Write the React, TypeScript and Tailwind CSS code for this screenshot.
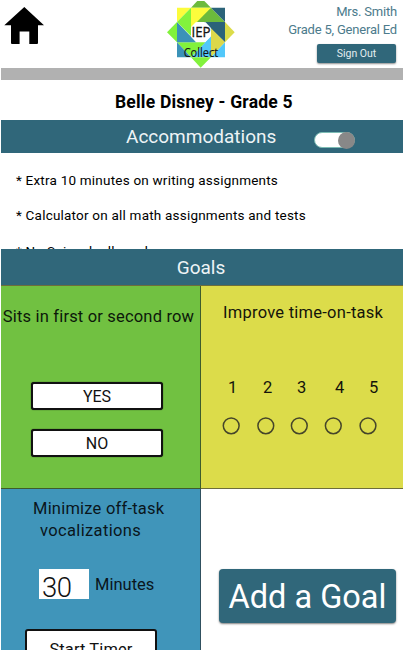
import React from "react";

function HomeIcon() {
  return (
    <svg width="40" height="38" viewBox="0 0 40 38" aria-label="Home">
      <path d="M20.3 0 L40 18.2 H34 V36 Q34 37 33 37 H25.3 V24.5 H15.6 V37 H8 Q7 37 7 36 V18.2 H0.3 Z" />
    </svg>
  );
}

function Logo() {
  return (
    <svg width="78" height="70" viewBox="0 0 234 210" className="block" aria-label="IEP Collect">
      <g clipPath="url(#top)">
        <polygon points="45,23 87,23 45,66" fill="#fcfc3c" />
        <polygon points="87,23 116,-8 147,23" fill="#6cba3c" />
        <polygon points="147,23 189,66 87,66" fill="#6cba3c" />
        <polygon points="87,23 147,23 87,84" fill="#fcfc3c" />
        <polygon points="147,23 189,23 189,66" fill="#2b6379" />
        <polygon points="126,66 189,66 189,127" fill="#2b6379" />
        <polygon points="189,66 218,97 189,127" fill="#dcdc4a" />
        <polygon points="147,85 189,127 147,172" fill="#dcd84a" />
        <polygon points="189,127 189,172 147,172" fill="#52c8fa" />
        <polygon points="147,108 147,172 87,172" fill="#52c8fa" />
        <polygon points="45,127 130,127 87,172" fill="#82f23c" />
        <polygon points="87,172 147,172 116,203" fill="#82f23c" />
        <polygon points="45,127 87,172 45,172" fill="#3b92b8" />
        <polygon points="45,66 45,127 103,127" fill="#3b92b8" />
        <polygon points="87,23 87,108 45,66" fill="#82f23c" />
        <polygon points="45,66 15,97 45,127" fill="#82f23c" />
        <polygon points="101,67 131,67 146,83 146,110 130,126 102,126 88,111 88,80" fill="#fff" />
      </g>
      <clipPath id="top">
        <rect x="0" y="3" width="234" height="207" />
      </clipPath>
      <g fill="#141414" fontFamily="Open Sans, Noto Sans, sans-serif" textAnchor="middle">
        <text x="117" y="111" fontSize="42" textLength="57" lengthAdjust="spacingAndGlyphs" stroke="#141414" strokeWidth="1">IEP</text>
        <text x="117" y="171" fontSize="36" textLength="104" lengthAdjust="spacingAndGlyphs" stroke="#141414" strokeWidth="0.4">Collect</text>
      </g>
    </svg>
  );
}

function Header() {
  return (
    <header className="flex h-[68px] items-start justify-between">
      <div className="w-[162px] pl-1 pt-[7px]">
        <HomeIcon />
      </div>
      <Logo />
      <div className="flex flex-1 flex-col items-end pr-[6px] pt-[3px] text-[13px] leading-[18px] tracking-[-0.2px] text-[#4c7b8c]">
        <span className="tracking-[-0.2px]">Mrs. Smith</span>
        <span className="whitespace-nowrap">Grade 5, General Ed</span>
        <button className="mr-px mt-[5px] h-[19px] w-[79px] rounded-[2px] bg-[#30677a] text-[10.5px] leading-[19px] tracking-normal text-[#e4edf0] shadow-[0_1px_2px_rgba(0,0,0,0.45)]">
          Sign Out
        </button>
      </div>
    </header>
  );
}

function Accommodations() {
  return (
    <section>
      <div className="ml-px flex h-[33px] items-center bg-[#30677a] pl-[125px]">
        <h2 className="w-[188px] text-[19px] leading-[33px] text-[#eef4f6]">Accommodations</h2>
        <div className="mt-[7px] flex h-4 w-[41px] items-center justify-end rounded-full border border-[#7cbcb4] bg-white">
          <div className="-mr-px size-[17px] shrink-0 rounded-full bg-[#888]" />
        </div>
      </div>
      <ul className="h-24 overflow-hidden pl-4 pt-[10px] text-[13.5px] leading-[35px] tracking-[0.21px] text-black">
        <li>* Extra 10 minutes on writing assignments</li>
        <li>* Calculator on all math assignments and tests</li>
        <li className="pt-px">* No Spinach allowed</li>
      </ul>
    </section>
  );
}

function SeatGoal() {
  return (
    <div className="flex flex-col items-center border-b border-r border-[#3e5c2c] bg-[#71c141] pr-[7px] pt-[19px] text-[#0c180a]">
      <h3 className="whitespace-nowrap pl-[3px] text-[16.5px] leading-6 tracking-[0.18px]">Sits in first or second row</h3>
      <button className="mt-[53px] h-7 w-[132px] rounded-[3px] border-2 border-[#111] bg-white text-base leading-[26px] text-[#111] shadow-[0_0_1px_#111]">YES</button>
      <button className="mt-[19px] h-7 w-[132px] rounded-[3px] border-2 border-[#111] bg-white text-base leading-[26px] text-[#111] shadow-[0_0_1px_#111]">NO</button>
    </div>
  );
}

function RatingGoal() {
  return (
    <div className="border-b border-[#6d6d3c] bg-[#dcdc4a] pt-[15px] text-[#14140a]">
      <h3 className="pl-[22px] text-[16.5px] leading-6 tracking-[0.25px]">Improve time-on-task</h3>
      <div className="mt-[51px] grid grid-cols-[35px_34px_38px_34px_20px] pl-[27px] text-[16.5px] leading-6">
        <span>1</span>
        <span>2</span>
        <span>3</span>
        <span>4</span>
        <span>5</span>
      </div>
      <svg className="ml-5 mt-4 block" width="160" height="20" viewBox="0 0 160 20" fill="none" stroke="#45452a" strokeWidth="1.5">
        <circle cx="10.2" cy="9.8" r="7.9" />
        <circle cx="44.8" cy="9.8" r="7.9" />
        <circle cx="78.3" cy="9.8" r="7.9" />
        <circle cx="112.3" cy="9.8" r="7.9" />
        <circle cx="147" cy="9.8" r="7.9" />
      </svg>
    </div>
  );
}

function TimerGoal() {
  return (
    <div className="overflow-hidden border-r border-[#30505f] bg-[#4095ba] pt-[9px] text-[#0a161c]">
      <h3 className="pl-8 text-[16.5px] leading-[22px] tracking-[0.22px]">
        <span className="block">Minimize off-task</span>
        <span className="block pl-[7px] tracking-[0.35px]">vocalizations</span>
      </h3>
      <div className="mt-[27px] flex pl-[38px]">
        <div className="h-[30px] w-[50px] overflow-hidden bg-white pl-[3px] pt-[3px] text-[27.5px] font-light leading-[32px] tracking-[-0.6px] text-[#111]">30</div>
        <span className="ml-[6px] mt-1 text-[16.5px] leading-6">Minutes</span>
      </div>
      <div className="ml-6 mt-[30px] h-10 w-[132px] rounded-[3px] border-2 border-[#111] bg-white pt-[7px] text-center text-[16.5px] leading-6 tracking-[0.1px] text-[#111]">Start Timer</div>
    </div>
  );
}

export default function App() {
  return (
    <main className="h-[651px] w-[404px] overflow-hidden bg-white font-[Roboto,'Liberation_Sans',sans-serif]">
      <div className="flex h-[650px] w-[403px] flex-col overflow-hidden">
        <Header />
        <div className="ml-px h-3 shrink-0 bg-[#b1b1b1]" />
        <h1 className="h-[40px] shrink-0 pl-[115px] pt-[10px] text-[17.5px] font-bold leading-6 tracking-[0.2px] text-black">Belle Disney - Grade 5</h1>
        <Accommodations />
        <h2 className="ml-px h-9 shrink-0 bg-[#30677a] pr-[2px] text-center text-[19px] leading-[37px] text-[#eef4f6]">Goals</h2>
        <div className="ml-px grid h-[365px] shrink-0 grid-cols-[200px_202px] grid-rows-[203px_161px] border-t border-[#6d6d3c]">
          <SeatGoal />
          <RatingGoal />
          <TimerGoal />
          <div className="pl-[18px] pt-20">
            <button className="h-[54px] w-[177px] rounded-[4px] bg-[#30677a] text-[32.5px] leading-[56px] text-white shadow-[0_1px_2px_rgba(0,0,0,0.5)]">Add a Goal</button>
          </div>
        </div>
      </div>
    </main>
  );
}
